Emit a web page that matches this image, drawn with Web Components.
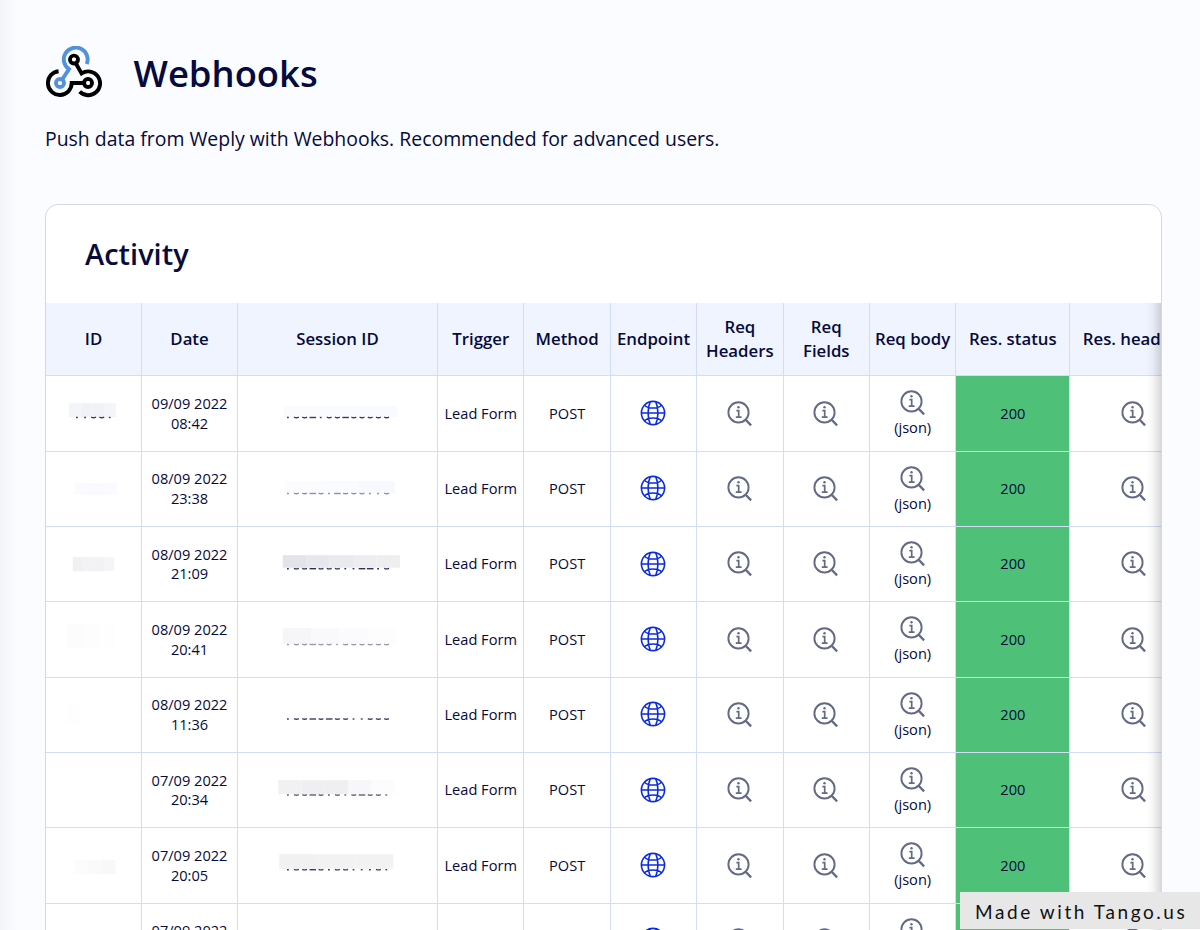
<!DOCTYPE html>
<html lang="en"><head><meta charset="utf-8"><title>Webhooks</title>
<style>html,body{margin:0;height:930px;overflow:hidden}body{font-family:"Open Sans","Noto Sans",sans-serif;color:#060a3c;background:#fbfcff}</style></head>
<body><webhooks-page></webhooks-page>
<script>
class Base extends HTMLElement{
  connectedCallback(){ if(!this.shadowRoot) this.attachShadow({mode:'open'}).innerHTML=this.view(); }
}
customElements.define('hook-logo',class extends Base{view(){return `<style>:host{display:block;width:56px;height:52px;margin:-4px -1px 0 1px}svg{display:block}</style>
<svg width="56" height="52" viewBox="0 0 56 52" fill="none" stroke-width="3.9">
<g stroke="#000"><path d="M12.6 25.2A11.9 11.9 0 1 0 25.7 37H41"/><path d="M28.2 14.5 35.6 27.4A11.9 11.9 0 1 1 33.7 45.6"/><circle cx="28" cy="13.6" r="4"/><circle cx="42" cy="37" r="4"/></g>
<g stroke="#5291dc"><path d="M14.5 36 22.9 23.2A11.9 11.9 0 1 1 40.7 18"/><circle cx="14" cy="37" r="4"/></g>
<g fill="#fbfcff"><circle cx="28" cy="13.6" r="2"/><circle cx="42" cy="37" r="2"/><circle cx="14" cy="37" r="2"/></g></svg>`}});
customElements.define('info-icon',class extends Base{view(){return `<style>:host{display:block;width:26px;height:26px}svg{display:block}</style>
<svg width="26" height="26" viewBox="0 0 26 26" fill="none" stroke="#626a86" stroke-width="1.9"><circle cx="11.5" cy="11.4" r="10.1"/><path d="M18.7 18.8 24.1 24.4" stroke-width="2.3"/><path d="M9.4 9.7H11.7V16.2M8.8 16.2H14.6" stroke-width="1.7"/><circle cx="11.5" cy="6.2" r="1.2" fill="#626a86" stroke="none"/></svg>`}});
customElements.define('globe-icon',class extends Base{view(){return `<style>:host{display:block;width:26px;height:26px}svg{display:block}</style>
<svg width="26" height="26" viewBox="0 0 26 26" fill="none" stroke="#0b2be0" stroke-width="1.6"><circle cx="13" cy="13" r="11.6"/><path d="M1.4 13H24.6M10.2 1.8C7.4 8 7.4 18 10.2 24.2M15.8 1.8C18.6 8 18.6 18 15.8 24.2M4.5 5.2C8 9 18 9 21.5 5.2M4.5 20.8C8 17 18 17 21.5 20.8"/></svg>`}});
customElements.define('redacted-value',class extends Base{view(){
 const g=k=>this.getAttribute(k)||'';const x=+g('x'),y=+g('y'),w=+g('w'),h=+g('h'),cs=g('colors').split(',').filter(Boolean);
 const W=+g('width');let s='';
 cs.forEach((c,i)=>s+=`<rect stroke="none" x="${x+w*i/cs.length}" y="${y}" width="${w/cs.length+.1}" height="${h}" fill="${c}"/>`);
 const m=+g('mx'),my=+g('my');[...g('marks')].forEach((c,i)=>{const a=m+i*8.2;
  if(c=='.')s+=`<path d="M${a+2.2} ${my}h1.8"/>`;else if(c=='_')s+=`<path d="M${a+.1} ${my}h6.6"/>`;else if(c=='o')s+=`<path d="M${a+1} ${my-.4}q2.4 1.2 4.8 0"/>`;});
 return `<style>:host{display:block;width:${W}px;height:75px}svg{display:block}</style><svg width="${W}" height="75" fill="none" stroke="#060a3c" stroke-opacity="${g('ink')||.8}" stroke-width="1.4"><g transform="translate(-.7 .2)">${s}</g></svg>`}});
customElements.define('grid-cell',class extends Base{view(){return `<style>
:host{display:flex;flex-direction:column;align-items:center;justify-content:center;text-align:center;box-sizing:border-box;border-right:1.33px solid #d3dcf8;border-bottom:1.33px solid #d3dcf8;font-size:14.6px;line-height:19.5px;white-space:nowrap;min-width:0;overflow:hidden}
:host([head]){background:#f0f4ff;font-size:16.8px;font-weight:600;line-height:24px}
:host([ok]){background:#4fc078}</style><slot></slot>`}});
const ids=[
 {x:22.5,y:27,w:47,h:14,colors:'#f4f5f8,#f1f2f6,#f1f2f6,#f4f5f9',mx:27.5,my:41.3,marks:'..oo.'},
 {x:28.5,y:32,w:42,h:11.5,colors:'#fbfbff,#f9faff,#fbfbff'},
 {x:26.5,y:30,w:41.5,h:14,colors:'#f0f0f3,#f2f2f5,#f2f2f5,#f5f5f7'},
 {x:20,y:22,w:50,h:24,colors:'#fcfcfc,#fdfdfd,#fefefe'},
 {x:20,y:27,w:15,h:21,colors:'#fefefe'},{},
 {x:27.5,y:32,w:41.5,h:14,colors:'#fcfcfc,#fafafa,#f8f8f8'},{}];
const ses=[
 {x:45.5,y:30,w:113,h:11,colors:'#fbfbfe,#fafbff,#f9faff',marks:'.oo_.oo_ooooo',my:41.3},
 {x:45.5,y:30,w:111,h:12,colors:'#fcfcff,#fafbff,#f8f9ff',marks:'.oo_o._ooo..o',my:42.3,ink:.45},
 {x:44.5,y:28,w:117,h:12.5,colors:'#e2e4ea,#e7e8ed,#e9eaee,#ededf1,#eeeef1',marks:'.oo_ooo..__.o',my:41.5,ink:.85},
 {x:44.5,y:26,w:113,h:16,colors:'#f6f6f8,#f9f9fb,#fbfbfd,#fdfdfe',marks:'.oo_oo.oooooo',my:42.3,ink:.4},
 {marks:'.oo_o_oo..ooo',my:41.8},
 {x:40,y:27,w:116,h:14,colors:'#f1f1f3,#efeff2,#efeff2,#f7f7f9,#fcfcfd',marks:'.oo_o.o.o_oo.',my:41.8,ink:.65},
 {x:41,y:26,w:114,h:14.5,colors:'#f1f1f2,#f2f2f2,#f2f2f2',marks:'.oo_o.oo...o.',my:41.5,ink:.8},{}];
const rv=(o,W)=>{const a={width:W,mx:46.5,...o};return `<redacted-value ${Object.entries(a).map(([k,v])=>`${k}="${v}"`).join(' ')}></redacted-value>`};
customElements.define('activity-table',class extends Base{view(){
 const c=(s,a='')=>`<grid-cell ${a}>${s}</grid-cell>`,i='<info-icon></info-icon>';
 const dates=['09/09 2022,08:42','08/09 2022,23:38','08/09 2022,21:09','08/09 2022,20:41','08/09 2022,11:36','07/09 2022,20:34','07/09 2022,20:05','07/09 2022,19:52'];
 return `<style>:host{display:block;overflow:hidden;height:627px}
 .g{display:grid;grid-template-columns:96px 96px 200px 86.4px 86.4px 86.4px 86.4px 86.4px 86.4px 114px 129px;grid-template-rows:73.4px repeat(8,75.33px);width:max-content}
 .j{display:block;margin-top:2px}info-icon{margin-top:0}globe-icon{margin:-1px 1px 0 0}.b{margin-top:1px}</style><div class="g">
 ${['ID','Date','Session ID','Trigger','Method','Endpoint','Req<br>Headers','Req<br>Fields','Req body','Res. status','Res. headers'].map(t=>c(`<span>${t}</span>`,'head')).join('')}
 ${dates.map((d,n)=>c(rv(ids[n],94))+c(`<span>${d.replace(',','<br>')}</span>`)+c(rv(ses[n],198))+c('Lead Form')+c('POST')+c('<globe-icon></globe-icon>')+c(i)+c(i)+c('<info-icon class="b"></info-icon><span class="j">(json)</span>')+c('200','ok')+c(i)).join('')}
 </div>`}});
customElements.define('activity-card',class extends Base{view(){return `<style>
:host{display:block;box-sizing:border-box;width:1117px;height:760px;border:1px solid #d6d8dc;border-radius:13px;background:#fff;position:relative;overflow:hidden}
h2{margin:0;padding:29px 39px 0;height:69px;font-size:29px;line-height:40px;font-weight:600}
.shade{position:absolute;right:0;top:98px;bottom:0;width:15px;background:linear-gradient(to right,#0000,#00000009 45%,#00000026)}</style>
<h2>Activity</h2><slot></slot><div class="shade"></div>`}});
customElements.define('tango-badge',class extends Base{view(){return `<style>:host{position:absolute;left:960px;top:892px;width:240px;height:37px;display:flex;align-items:center;box-sizing:border-box;padding:2px 0 0 15px;background:#e7e7e7;color:#111;font:19px/35px Lato,sans-serif;letter-spacing:2.57px;white-space:nowrap}</style><slot></slot>`}});
customElements.define('webhooks-page',class extends Base{view(){return `<style>
:host{display:block;position:relative;box-sizing:border-box;width:1200px;height:930px;overflow:hidden;padding:45px 0 0 45px;background:linear-gradient(to right,#f4f5f8,#fbfcff 18px)}
header{display:flex;height:58px;align-items:center;gap:32.5px}h1{margin:-2px 0 0;font-size:36.4px;line-height:56px;font-weight:600}
p{margin:21px 0 50px;font-size:19.43px;line-height:30px}</style>
<header><hook-logo></hook-logo><h1>Webhooks</h1></header>
<p>Push data from Weply with Webhooks. Recommended for advanced users.</p>
<activity-card><activity-table></activity-table></activity-card><tango-badge>Made with Tango.us</tango-badge>`}});
</script></body></html>
